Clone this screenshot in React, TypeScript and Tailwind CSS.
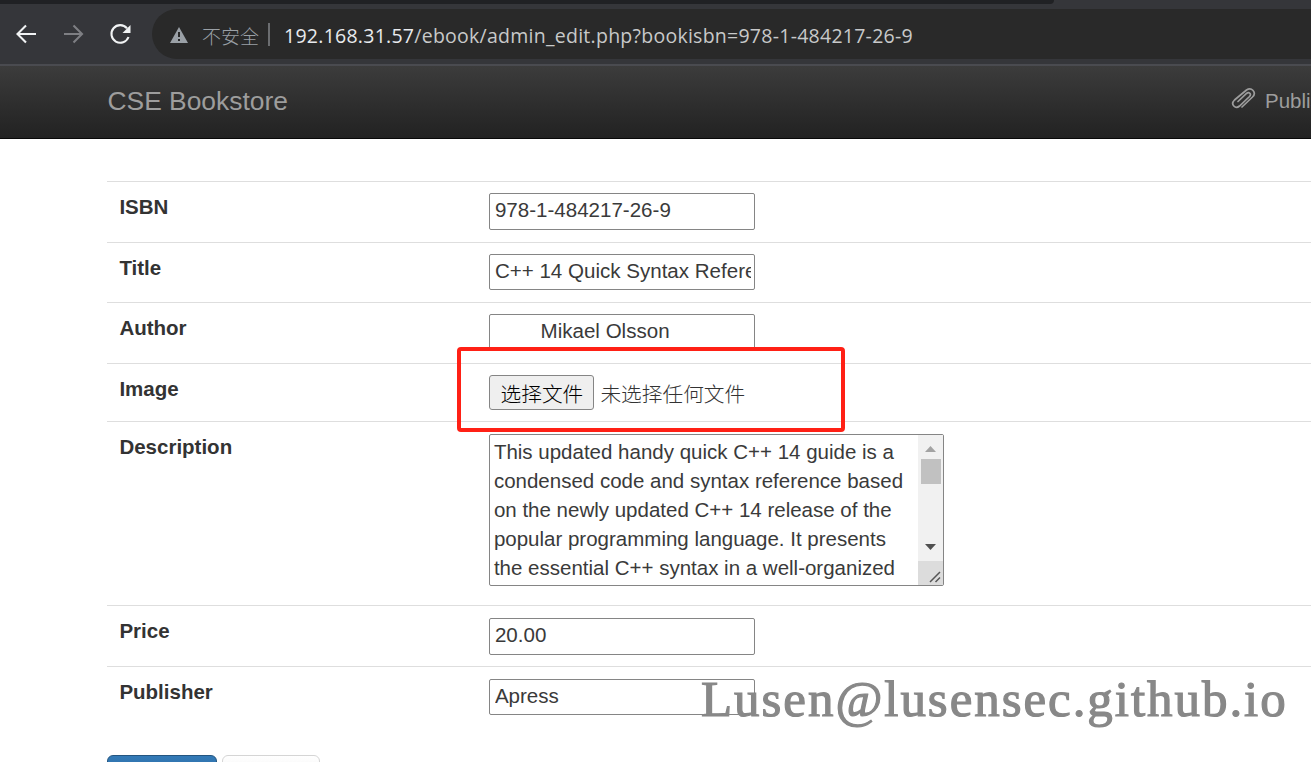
import type { ReactNode } from "react";

const field =
  "block w-[266px] rounded-[2px] border-[1.5px] border-[#858585] bg-white pl-[4.5px] pr-[3px] pb-[3px] text-[20.55px] text-[#3a3a3a] outline-none";

function Row({ label, height, children }: { label: string; height: string; children: ReactNode }) {
  return (
    <div className={"flex w-full border-t border-[#dedede] " + height}>
      <div className="w-[382px] shrink-0 pl-[12px] pt-[10px] text-[20.5px] leading-[29px] font-bold">{label}</div>
      <div className="min-w-0 grow pt-[11px]">{children}</div>
    </div>
  );
}

const description = [
  "This updated handy quick C++ 14 guide is a",
  "condensed code and syntax reference based",
  "on the newly updated C++ 14 release of the",
  "popular programming language. It presents",
  "the essential C++ syntax in a well-organized",
];

export default function App() {
  return (
    <div className="relative flex h-[762px] w-[1311px] flex-col overflow-hidden bg-white font-['Liberation_Sans',Arial,'Noto_Sans_CJK_SC',sans-serif] text-[#333]">
      <div className="h-[4px] shrink-0 bg-[#35363a]">
        <div className="h-full w-[1054px] rounded-br-[8px] bg-[#202124]" />
      </div>
      <header className="flex h-[60px] shrink-0 items-center bg-[#35363a]">
        <svg className="ml-[14px] shrink-0" width="122" height="40" viewBox="14 14 122 40" fill="none" strokeWidth="2.1">
          <path d="M36 34H18M26 25.5L17.5 34L26 42.5" stroke="#f1f3f4" />
          <path d="M64 34H82M73.500 25.500L82 34L73.500 42.500" stroke="#7e7f83" />
          <path d="M127 28.300A8.800 8.800 0 1 0 128.500 37" stroke="#f1f3f4" />
          <path d="M130.500 25V33H122.500Z" fill="#f1f3f4" />
        </svg>
        <div className="ml-[16px] flex h-[50px] grow items-center rounded-l-[25px] bg-[#292929] pl-[17px]">
          <svg className="mt-[2px] shrink-0" width="20" height="18" viewBox="0 0 20 18">
            <path d="M10 1L19 17H1Z" fill="#9aa0a6" />
            <path d="M10 6V11M10 13V15" stroke="#292929" strokeWidth="2" />
          </svg>
          <span className="mt-[3px] ml-[13px] font-['Noto_Sans_CJK_SC',sans-serif] text-[19px] leading-[28px] font-light text-[#9aa0a6]">不安全</span>
          <span className="ml-[9px] h-[23px] w-[2px] bg-[#6b6d70]" />
          <span className="mt-[3px] ml-[14px] font-['Open_Sans','Noto_Sans',sans-serif] text-[19.5px] leading-[28px] tracking-[0.260px] whitespace-nowrap text-[#c8c9ca]">
            <span className="text-[#e8eaed]">192.168.31.57</span>/ebook/admin_edit.php?bookisbn=978-1-484217-26-9
          </span>
        </div>
      </header>
      <nav className="flex h-[75px] shrink-0 items-center justify-between border-t-2 border-b border-t-[#4a4b50] border-b-[#080808] bg-linear-to-b from-[#3c3c3c] to-[#222] pb-[3px] pl-[107.500px] text-[#9d9d9d]">
        <span className="text-[26.400px] leading-[38px]">CSE Bookstore</span>
        <span className="flex w-[80px] items-center overflow-hidden whitespace-nowrap">
          <svg className="-mt-[5px] shrink-0" width="25" height="22" viewBox="0 0 25 22" fill="none" stroke="#9d9d9d" strokeWidth="1.700" strokeLinecap="round">
            <path d="M11 20L21.500 10C26 5.500 20.500-0.500 15.500 3L3.500 13C-1 17.500 4.500 22.500 8.500 19L18.500 9.500C21 7 18 4.500 15.500 6.500L7 14.500" />
          </svg>
          <span className="ml-[9px] text-[20.500px] leading-[29px]">Publisher</span>
        </span>
      </nav>
      <main className="flex shrink-0 flex-col pt-[42px] pl-[107.400px]">
        <Row label="ISBN" height="h-[61px]"><input className={field + " h-[37px]"} defaultValue="978-1-484217-26-9" /></Row>
        <Row label="Title" height="h-[60px]"><input className={field + " h-[36px]"} defaultValue="C++ 14 Quick Syntax Reference" /></Row>
        <Row label="Author" height="h-[61px]"><input className={field + " h-[36px]"} defaultValue={"\u00a0\u00a0\u00a0\u00a0\u00a0\u00a0\u00a0\u00a0Mikael Olsson"} /></Row>
        <Row label="Image" height="h-[58.400px]">
          <div className="flex items-center font-['Noto_Sans_CJK_SC',sans-serif] text-[20.700px] leading-[30px] font-light">
            <button className="h-[35px] w-[105px] rounded-[3px] border-[1.500px] border-[#858585] bg-[#efefef] text-black">选择文件</button>
            <span className="ml-[6px]">未选择任何文件</span>
          </div>
        </Row>
        <Row label="Description" height="h-[184px]">
          <div className="mt-[1px] flex h-[152px] w-[455px] rounded-[2px] border-[1.500px] border-[#858585]">
            <div className="grow pt-[3px] pl-[3.500px] text-[20.500px] leading-[28.800px] whitespace-nowrap text-[#3a3a3a]">
              {description.map((line) => <div key={line}>{line}</div>)}
            </div>
            <div className="flex w-[25px] shrink-0 flex-col items-center bg-[#f1f1f1]">
              <svg width="25" height="24" viewBox="0 0 25 24"><path d="M7 17L12.500 11L18 17Z" fill="#a3a3a3" /></svg>
              <div className="h-[25px] w-[20px] bg-[#c1c1c1]" />
              <div className="grow" />
              <svg width="25" height="26" viewBox="0 0 25 26"><path d="M7 9L12.500 15L18 9Z" fill="#505050" /></svg>
              <div className="h-[24px] w-full bg-[#dcdcdc]">
                <svg width="25" height="24" viewBox="0 0 25 24" stroke="#555" strokeWidth="1.500"><path d="M12 21L22 11M17.500 21L22 16.500" /></svg>
              </div>
            </div>
          </div>
        </Row>
        <Row label="Price" height="h-[61px]"><input className={field + " mt-[1px] h-[37px]"} defaultValue="20.00" /></Row>
        <Row label="Publisher" height="h-[88.500px]"><input className={field + " mt-[1px] h-[36px]"} defaultValue="Apress" /></Row>
        <div className="flex gap-[5px]">
          <button aria-label="Change" className="h-[50px] w-[110px] rounded-[6px] border-[1.500px] border-[#245580] bg-linear-to-b from-[#337ab7] to-[#265a88]" />
          <button aria-label="Cancel" className="h-[50px] w-[98px] rounded-[6px] border-[1.500px] border-[#d5d5d5] bg-linear-to-b from-white to-[#e0e0e0]" />
        </div>
      </main>
      <div className="pointer-events-none absolute top-[347px] left-[457px] h-[85px] w-[388px] rounded-[4px] border-4 border-[#ff2015]" />
      <div className="pointer-events-none absolute top-[670px] left-[701px] font-['Liberation_Serif',serif] text-[51px] leading-[58px] tracking-[1.950px] whitespace-nowrap text-[#888] [-webkit-text-stroke:1.200px_#888]">Lusen@lusensec.github.io</div>
    </div>
  );
}
